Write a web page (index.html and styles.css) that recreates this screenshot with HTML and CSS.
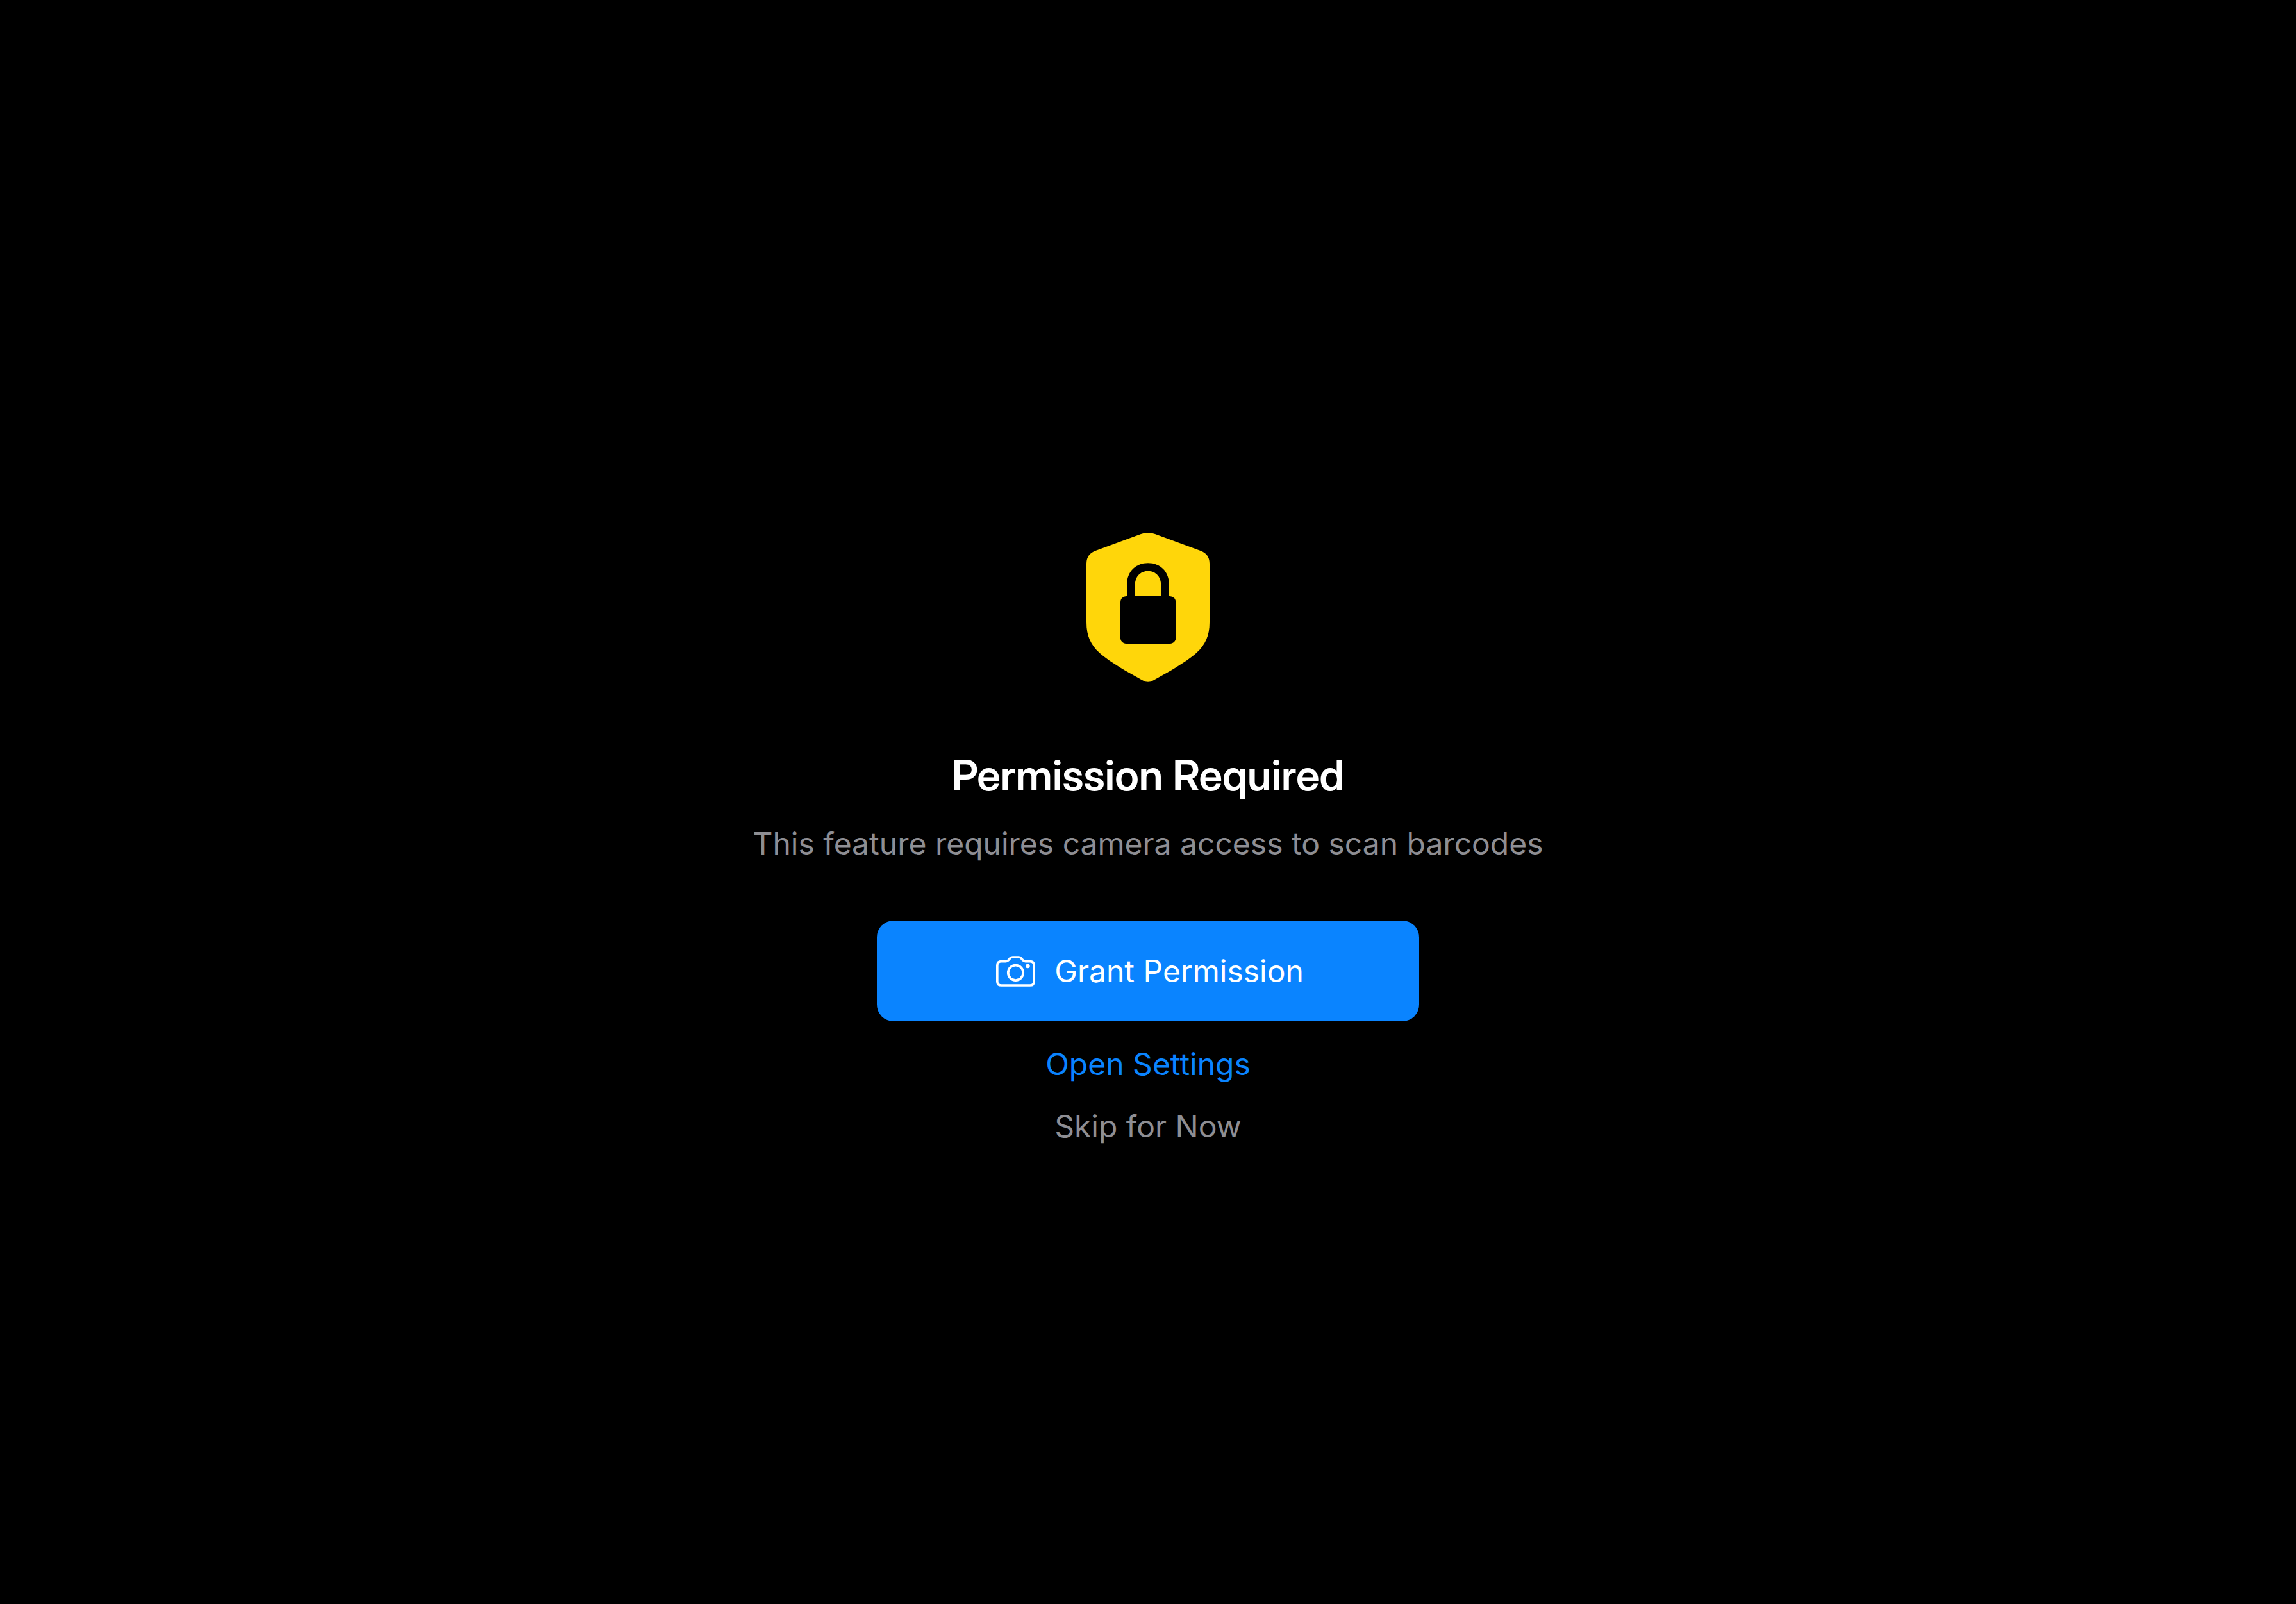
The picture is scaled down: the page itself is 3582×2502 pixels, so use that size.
FILE: index.html
```html
<!DOCTYPE html>
<html lang="en">
<head>
<meta charset="utf-8">
<meta name="viewport" content="width=device-width, initial-scale=1">
<title>Permission Required</title>
<link rel="stylesheet" href="styles.css">
</head>
<body>
<main class="screen">
  <svg class="shield" viewBox="45 36 576 699" aria-hidden="true">
    <path class="shield-body" d="M300 42Q333 30 366 42L578 120Q621 136 621 180V455C621 566 560 608 441 680L358 727Q333 742 308 727L225 680C106 608 45 566 45 455V180Q45 136 88 120Z"/>
    <path class="shield-lock" fill-rule="evenodd" d="M234 332V280C234 218 275 178 333 178S432 218 432 280V332Q464 334 464 366V521Q464 555 430 555H237Q203 555 203 521V366Q203 334 234 332ZM272 331H394V282C394 240 368 215 333 215S272 240 272 282Z"/>
  </svg>
  <h1 class="title">Permission Required</h1>
  <p class="description">This feature requires camera access to scan barcodes</p>
  <div class="actions">
    <button class="primary" type="button">
      <svg class="camera" viewBox="38 34 184 144" aria-hidden="true">
        <path d="M63.500 59.500H84Q91 59.500 96 54L104 45Q109 39.500 116 39.500H144Q151 39.500 156 45L164 54Q169 59.500 176 59.500H197Q216.500 59.500 216.500 78V154Q216.500 172.500 197 172.500H63Q43.500 172.500 43.500 154V78Q43.500 59.500 63.500 59.500Z"/>
        <circle cx="130" cy="113" r="35.500"/>
        <circle class="camera-dot" cx="187" cy="82" r="10"/>
      </svg>
      <span>Grant Permission</span>
    </button>
    <button class="plain" type="button">Open Settings</button>
    <button class="plain muted" type="button">Skip for Now</button>
  </div>
</main>
</body>
</html>
```
FILE: styles.css
```css
* {
  box-sizing: border-box;
}

body {
  margin: 0;
  background: #000;
  color: #fff;
  font-family: Inter, "Liberation Sans", sans-serif;
  font-size: 48px;
  line-height: 61px;
}

.screen {
  min-height: 100vh;
  padding: 116px 48px 0;
  display: flex;
  flex-direction: column;
  align-items: center;
  justify-content: center;
  text-align: center;
}

.shield {
  width: 192px;
  height: 233px;
  margin-bottom: 105px;
}

.shield-body {
  fill: #ffd60a;
}

.shield-lock {
  fill: #000;
}

.title {
  margin: 0 0 36px;
  font-family: "Inter Display", Inter, "Liberation Sans", sans-serif;
  font-size: 66px;
  font-weight: 600;
  line-height: 80px;
}

.description {
  margin: 0 0 90px;
  color: #8e8e93;
}

.actions {
  width: 100%;
  max-width: 846px;
  display: flex;
  flex-direction: column;
  align-items: center;
  gap: 36px;
}

button {
  margin: 0;
  border: 0;
  font: inherit;
  cursor: pointer;
}

.primary {
  width: 100%;
  padding: 48px 48px 48px 54px;
  display: flex;
  align-items: center;
  justify-content: center;
  gap: 30px;
  border-radius: 26px;
  background: #0a84ff;
  color: #fff;
}

.camera {
  width: 61px;
  height: 48px;
  fill: none;
  stroke: currentColor;
  stroke-width: 11;
}

.camera-dot {
  fill: currentColor;
  stroke: none;
}

.plain {
  padding: 0;
  background: none;
  color: #0a84ff;
}

.muted {
  color: #8e8e93;
}
```
